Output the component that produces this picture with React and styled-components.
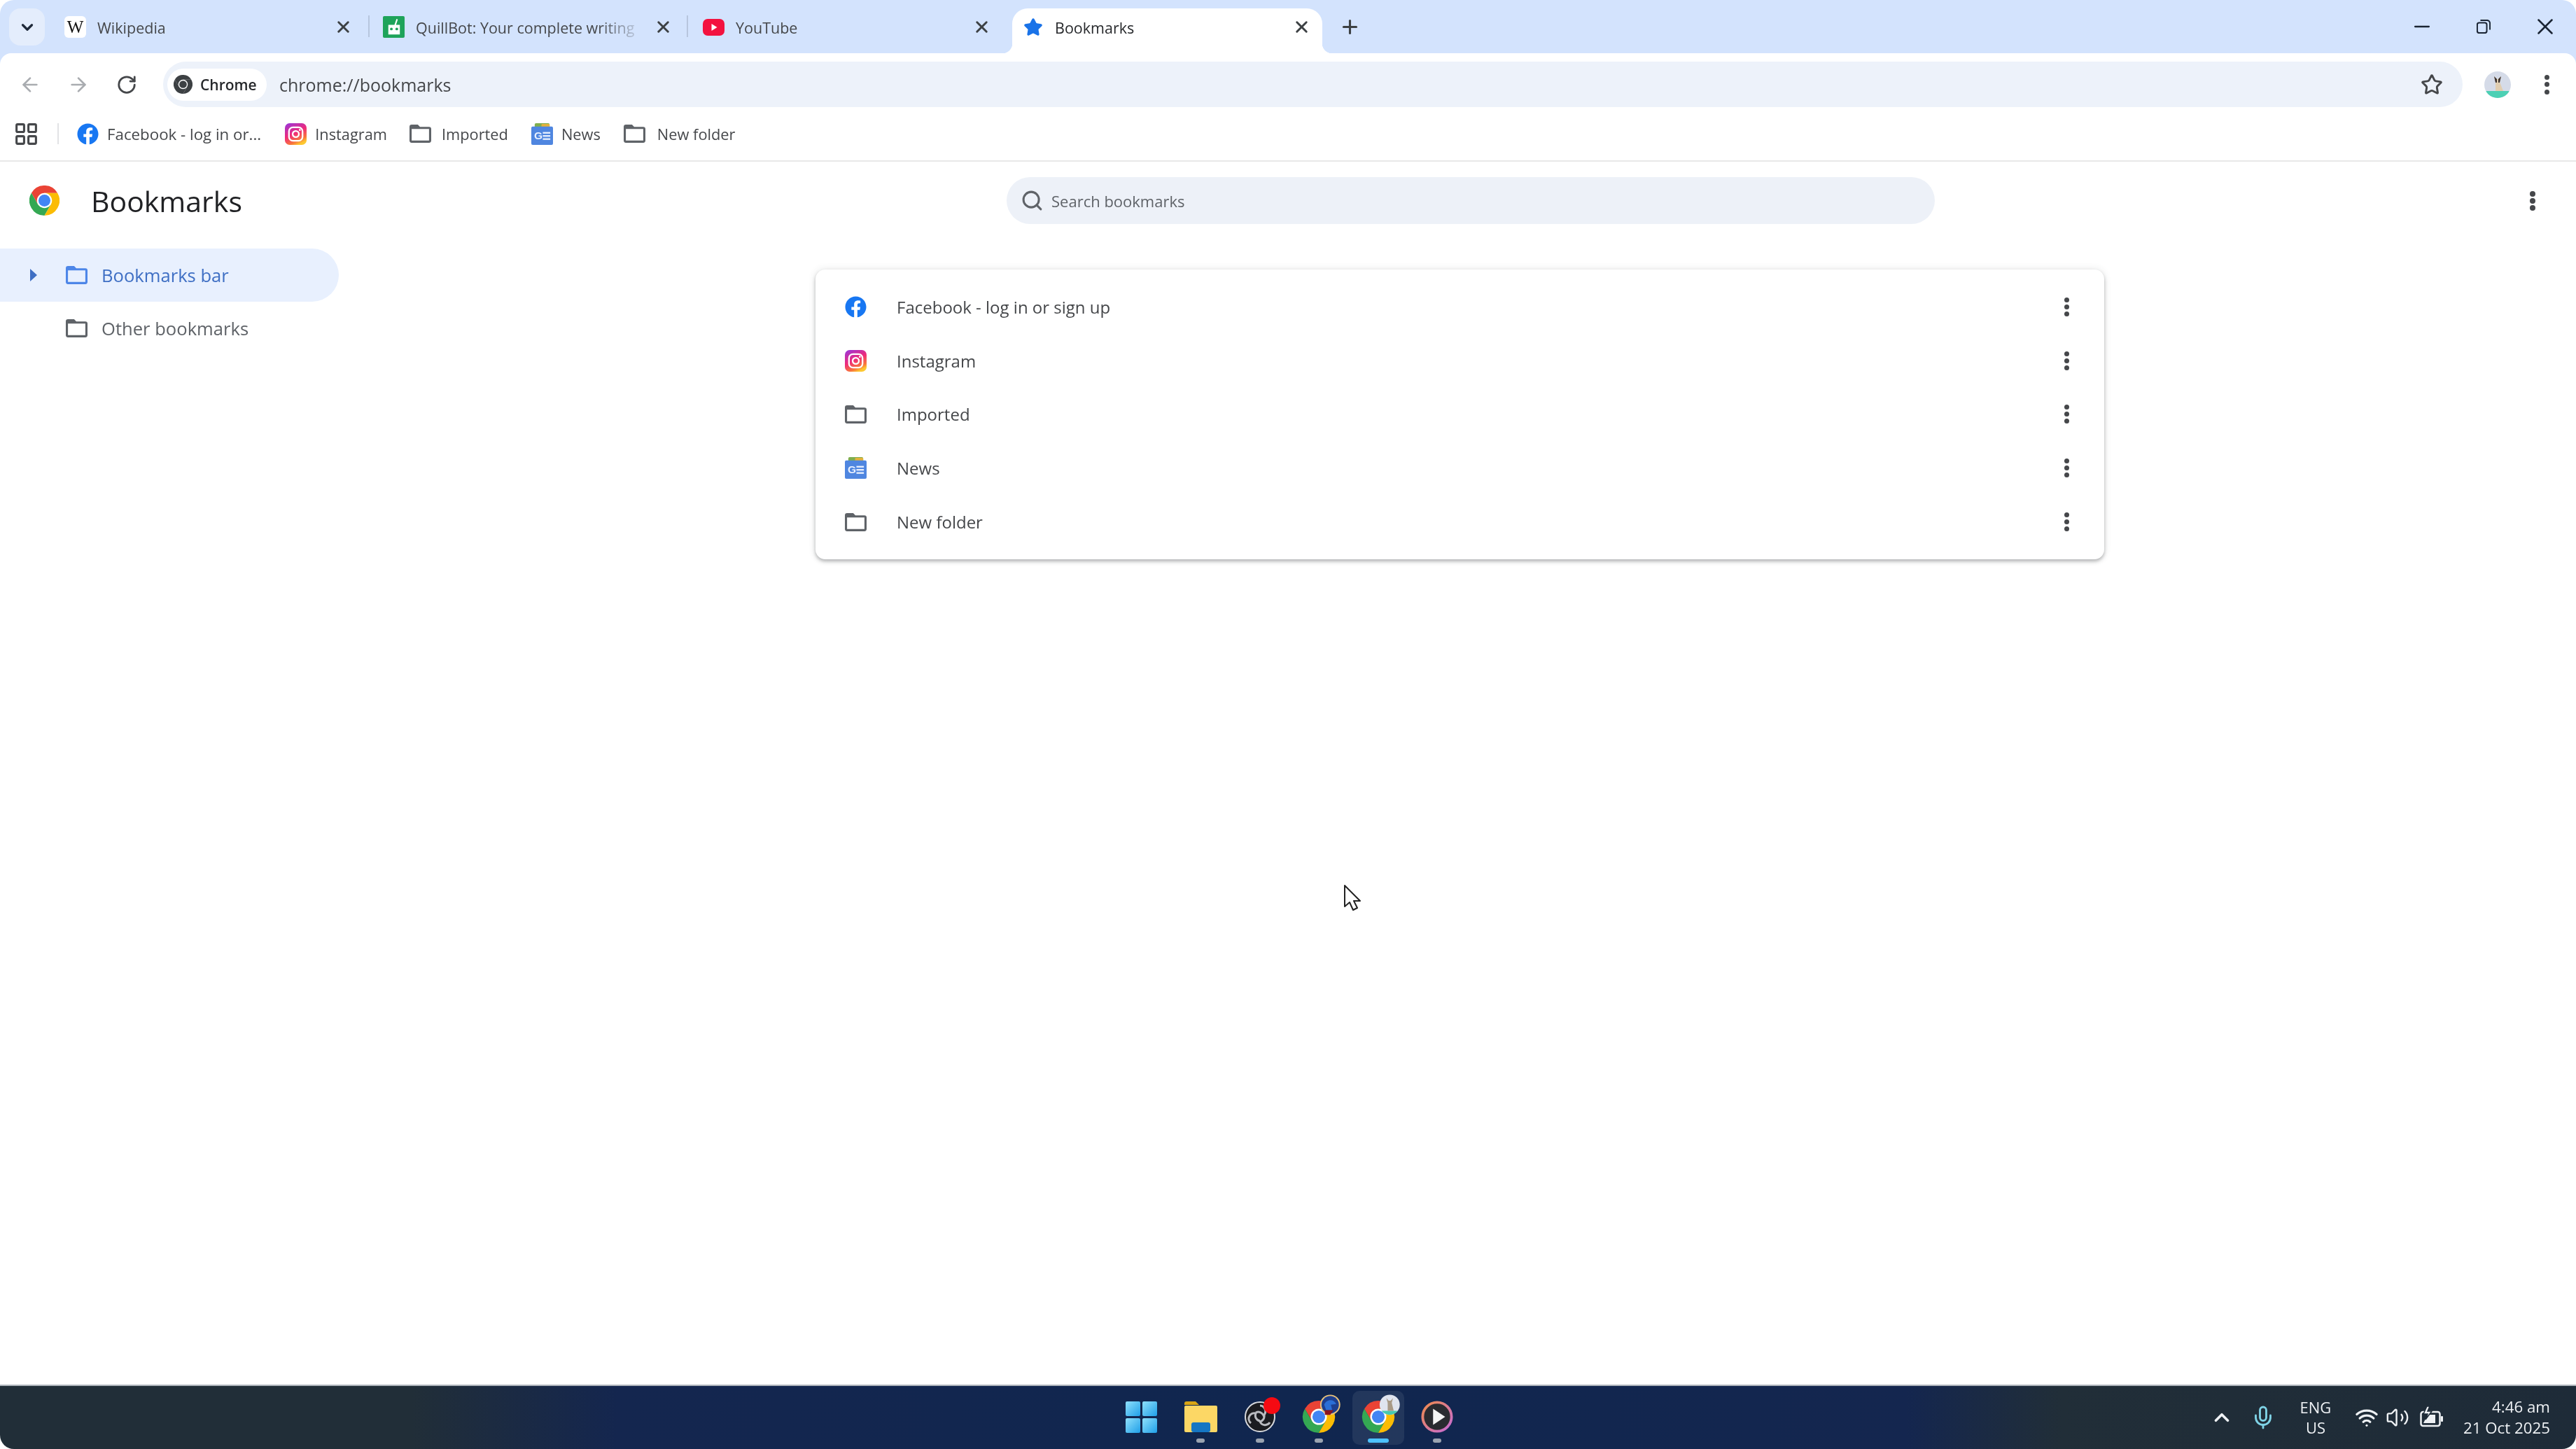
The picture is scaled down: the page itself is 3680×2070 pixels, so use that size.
import React from 'react';
import styled, { createGlobalStyle } from 'styled-components';
import { FaFacebook } from 'react-icons/fa';
import {
  ArrowLeft, ArrowRight, ChevronDown, ChevronUp, LayoutGrid, Mic, Minus, Plus,
  RotateCw, Search, Star, Volume2, Wifi, X,
} from 'lucide-react';

const UI_FONT = '"Open Sans", "Noto Sans", sans-serif';

const GlobalStyle = createGlobalStyle`
  html, body { margin: 0; padding: 0; background: #fff; }
  body { font-family: ${UI_FONT}; }
  * { box-sizing: border-box; }
`;

const Page = styled.div`
  position: relative;
  width: 3680px;
  height: 2070px;
  display: flex;
  flex-direction: column;
  overflow: hidden;
  background: #fff;
  filter: blur(0.5px);
`;

const BrowserTop = styled.div`
  flex: none;
  background: #d3e3fd;
  border-radius: 20px 20px 0 0;
`;

/* ---------- tab strip ---------- */

const TabStrip = styled.div`
  height: 76px;
  display: flex;
  align-items: flex-start;
  padding-left: 13px;
`;

const TabSearch = styled.div`
  width: 51px;
  height: 53px;
  margin: 12px 15px 0 0;
  display: flex;
  align-items: center;
  justify-content: center;
  border-radius: 16px;
  background: #e4edfc;
  color: #1f2a3a;
`;

const Tab = styled.div`
  position: relative;
  width: ${p => p.$width}px;
  height: 64px;
  margin-top: 12px;
  flex: none;
  display: flex;
  align-items: flex-start;
  padding: 11px 0 0 ${p => p.$pad}px;
  color: ${p => (p.$active ? '#26282b' : '#45474a')};
  background: ${p => (p.$active ? '#fff' : 'transparent')};
  border-radius: ${p => (p.$active ? '22px 22px 0 0' : '0')};
  border-right: ${p => (p.$divider ? '2px solid' : 'none')};
  border-image: ${p => (p.$divider ? 'linear-gradient(transparent 11px, #b7c6de 11px, #b7c6de 41px, transparent 41px) 1' : 'none')};

  &::before, &::after {
    content: '';
    display: ${p => (p.$active ? 'block' : 'none')};
    position: absolute;
    bottom: 0;
    width: 14px;
    height: 14px;
  }
  &::before {
    left: -14px;
    background: radial-gradient(circle at 0 0, transparent 14px, #fff 14.5px);
  }
  &::after {
    right: -14px;
    background: radial-gradient(circle at 100% 0, transparent 14px, #fff 14.5px);
  }
`;

const TabIcon = styled.span`
  width: 31px;
  height: 31px;
  flex: none;
  display: flex;
  align-items: center;
  justify-content: center;
`;

const TabTitle = styled.span`
  flex: 1;
  min-width: 0;
  margin-left: 16px;
  padding-top: 1px;
  font-size: 21.5px;
  line-height: 31px;
  white-space: nowrap;
  -webkit-mask-image: ${p => (p.$fade ? 'linear-gradient(90deg, #000 80%, transparent)' : 'none')};
`;

const TabClose = styled.span`
  width: 30px;
  height: 31px;
  margin: 0 ${p => p.$gap}px 0 12px;
  flex: none;
  display: flex;
  align-items: center;
  justify-content: center;
  color: #3c4043;
`;

const NewTab = styled.div`
  margin: 23px 0 0 24px;
  color: #3c4043;
  display: flex;
`;

const WindowControls = styled.div`
  margin-left: auto;
  display: flex;
  height: 76px;
`;

const WindowButton = styled.div`
  width: 88px;
  height: 76px;
  display: flex;
  align-items: center;
  justify-content: center;
  color: #1a2433;
`;

/* ---------- toolbar ---------- */

const Toolbar = styled.div`
  height: 77px;
  display: flex;
  align-items: flex-start;
  padding-top: 12px;
  background: #fff;
  border-radius: 16px 16px 0 0;
`;

const NavGroup = styled.div`
  display: flex;
  width: 233px;
  padding-left: 8px;
`;

const NavButton = styled.div`
  width: 69px;
  height: 65px;
  flex: none;
  display: flex;
  align-items: center;
  justify-content: center;
  color: ${p => (p.$disabled ? '#a9acb0' : '#45474a')};
`;

const AddressBar = styled.div`
  width: 3285px;
  height: 65px;
  flex: none;
  display: flex;
  align-items: center;
  padding: 0 28px 0 6px;
  border-radius: 33px;
  background: #edf2fa;
`;

const SecurityChip = styled.div`
  width: 142px;
  height: 46px;
  flex: none;
  display: flex;
  align-items: center;
  gap: 11px;
  padding-left: 9px;
  border-radius: 23px;
  background: #fff;
  color: #26282b;
  font-size: 21px;
  font-weight: 600;
`;

const UrlText = styled.span`
  margin-left: 18px;
  font-size: 25px;
  color: #45474a;
`;

const BookmarkStar = styled.div`
  margin-left: auto;
  display: flex;
  color: #45474a;
`;

const ToolbarEnd = styled.div`
  flex: 1;
  display: flex;
  align-items: center;
  justify-content: space-between;
  height: 65px;
  padding: 0 38px 0 31px;
`;

const MenuDots = styled.div`
  display: flex;
  flex-direction: column;
  align-items: center;
  gap: ${p => p.$gap}px;
  span {
    width: ${p => p.$size}px;
    height: ${p => p.$size}px;
    border-radius: 50%;
    background: #45474a;
  }
`;

/* ---------- bookmarks bar ---------- */

const BookmarksBar = styled.div`
  height: 78px;
  flex: none;
  display: flex;
  align-items: center;
  padding-left: 19px;
  background: #fff;
  border-bottom: 2px solid #e8e8e8;
`;

const AppsButton = styled.div`
  display: flex;
  color: #45474a;
`;

const BarDivider = styled.div`
  width: 2px;
  height: 30px;
  margin: 0 26px 0 26px;
  background: #e2e3e5;
`;

const BarItem = styled.div`
  display: flex;
  align-items: center;
  gap: ${p => p.$iconGap || 12}px;
  margin-right: ${p => p.$gap || 0}px;
  font-size: ${p => p.$size || 21.8}px;
  color: #45474a;
  white-space: nowrap;
`;

/* ---------- main page ---------- */

const Main = styled.div`
  flex: 1;
  min-height: 0;
  display: flex;
  flex-direction: column;
`;

const PageHeader = styled.div`
  height: 124px;
  flex: none;
  display: flex;
  align-items: center;
  padding: 0 58px 13px 42px;
`;

const PageTitle = styled.h1`
  width: 1396px;
  margin: 0;
  display: flex;
  align-items: center;
  gap: 45px;
  font-size: 41px;
  font-weight: 500;
  color: #202124;
`;

const SearchBox = styled.div`
  width: 1326px;
  height: 67px;
  flex: none;
  display: flex;
  align-items: center;
  gap: 11px;
  padding-left: 20px;
  border-radius: 34px;
  background: #edf1f8;
  color: #5f6368;
  font-size: 22px;
  font-weight: 500;
`;

const HeaderEnd = styled.div`
  flex: 1;
  display: flex;
  justify-content: flex-end;
`;

const Content = styled.div`
  flex: 1;
  display: flex;
  align-items: flex-start;
`;

const Sidebar = styled.nav`
  width: 484px;
  flex: none;
`;

const TreeRow = styled.div`
  height: 76px;
  display: flex;
  align-items: center;
  padding-left: 43px;
  border-radius: 0 38px 38px 0;
  background: ${p => (p.$selected ? '#e8f0fe' : 'transparent')};
  color: ${p => (p.$selected ? '#3f6fc4' : '#5f6368')};
  font-size: 25.6px;
  font-weight: 500;
`;

const TreeArrow = styled.span`
  width: 51px;
  flex: none;
  display: flex;
`;

const TreeLabel = styled.span`
  margin-left: 20px;
`;

const ListCard = styled.div`
  width: 1841px;
  height: 414px;
  margin: 30px 0 0 681px;
  display: flex;
  flex-direction: column;
  justify-content: center;
  border-radius: 14px;
  background: #fff;
  box-shadow: 0 3px 5px rgba(60, 64, 67, 0.35), 0 0 12px rgba(60, 64, 67, 0.12);
`;

const ListRow = styled.div`
  height: 76.8px;
  display: flex;
  align-items: center;
  padding: 0 50px 0 42px;
`;

const ListIcon = styled.span`
  width: 31px;
  flex: none;
  display: flex;
  justify-content: center;
`;

const ListTitle = styled.span`
  flex: 1;
  margin-left: 43px;
  font-size: 24px;
  color: #45474a;
`;

/* ---------- taskbar ---------- */

const Taskbar = styled.div`
  height: 92px;
  flex: none;
  display: grid;
  grid-template-columns: 1fr auto 1fr;
  align-items: center;
  border-top: 2px solid #aeb4bb;
  border-radius: 0 0 20px 20px;
  background: linear-gradient(90deg, #212e38 0%, #212e38 16%, #14264f 24%, #10264f 50%, #14264f 74%, #212e38 80%, #1e2b38 100%);
`;

const TaskCenter = styled.div`
  grid-column: 2;
  display: flex;
  align-items: center;
  padding-left: 4px;
`;

const TaskButton = styled.div`
  position: relative;
  width: ${p => (p.$active ? 74.6 : 84.6)}px;
  height: 77px;
  margin: 0 ${p => (p.$active ? 5 : 0)}px;
  display: flex;
  align-items: center;
  justify-content: center;
  padding-bottom: 2px;
  border-radius: 10px;
  background: ${p => (p.$active ? 'rgba(255, 255, 255, 0.08)' : 'transparent')};

  svg {
    overflow: visible;
  }

  &::after {
    content: '';
    display: ${p => (p.$open || p.$active ? 'block' : 'none')};
    position: absolute;
    left: 50%;
    bottom: 3px;
    width: ${p => (p.$active ? 30 : 12)}px;
    height: 6px;
    margin-left: ${p => (p.$active ? -15 : -6)}px;
    border-radius: 3px;
    background: ${p => (p.$active ? '#4cc2ff' : '#9aa3b0')};
  }
`;

const Tray = styled.div`
  grid-column: 3;
  display: flex;
  align-items: center;
  justify-content: flex-end;
  padding-right: 37px;
  color: #eef1f4;
`;

const TrayIcon = styled.span`
  display: flex;
  margin-right: ${p => p.$gap}px;
  color: ${p => p.$color || '#eef1f4'};
`;

const Lang = styled.div`
  width: 60px;
  margin-right: 26px;
  font-size: 22px;
  line-height: 29px;
  text-align: center;
`;

const Clock = styled.div`
  margin-left: 28px;
  font-size: 22.3px;
  line-height: 30px;
  text-align: right;
  white-space: nowrap;
`;

const Cursor = styled.svg`
  position: absolute;
  left: 1919px;
  top: 1263px;
`;

const WikiBadge = styled.span`
  width: 31px;
  height: 31px;
  display: flex;
  align-items: center;
  justify-content: center;
  border-radius: 6px;
  background: #fff;
  color: #111;
  font-family: "Liberation Serif", serif;
  font-size: 25px;
`;

/* ---------- drawn icons ---------- */

const ChromeLogo = ({ size, mono }) => (
  <svg width={size} height={size} viewBox="0 0 48 48">
    <path fill={mono ? '#3c4043' : '#ea4335'} d="M44.8 12A24 24 0 0 0 3.2 12L13.6 30 24 24V12z" />
    <path fill={mono ? '#3c4043' : '#34a853'} d="M3.2 12A24 24 0 0 0 24 48L34.4 30 24 24 13.6 30z" />
    <path fill={mono ? '#3c4043' : '#fbbc04'} d="M24 48A24 24 0 0 0 44.8 12H24v12l10.4 6z" />
    <circle cx="24" cy="24" r="12" fill="#fff" />
    <circle cx="24" cy="24" r="9.5" fill={mono ? '#3c4043' : '#4285f4'} />
  </svg>
);

const FolderIcon = ({ color = '#5f6368', width = 31, height = 26 }) => (
  <svg width={width} height={height} viewBox="0 0 30 25">
    <path
      fill={color}
      fillRule="evenodd"
      d="M3 0h8.5l3 3H27a3 3 0 0 1 3 3v16a3 3 0 0 1-3 3H3a3 3 0 0 1-3-3V3a3 3 0 0 1 3-3zM3 6v16h24V6z"
    />
  </svg>
);

const InstagramIcon = ({ size = 31 }) => (
  <svg width={size} height={size} viewBox="0 0 32 32">
    <defs>
      <linearGradient id="ig" x1="0.1" y1="0" x2="0.6" y2="1">
        <stop offset="0" stopColor="#9b36d9" />
        <stop offset="0.5" stopColor="#ee2a7b" />
        <stop offset="0.85" stopColor="#f9773a" />
        <stop offset="1" stopColor="#fdc830" />
      </linearGradient>
    </defs>
    <rect width="32" height="32" rx="7" fill="url(#ig)" />
    <rect x="6" y="6" width="20" height="20" rx="6" fill="none" stroke="#fff" strokeWidth="2.4" />
    <circle cx="16" cy="16" r="4.6" fill="none" stroke="#fff" strokeWidth="2.4" />
    <circle cx="22" cy="10" r="1.4" fill="#fff" />
  </svg>
);

const NewsIcon = ({ size = 31 }) => (
  <svg width={size} height={size} viewBox="0 0 32 32">
    <rect x="5" y="0" width="22" height="8" rx="2" fill="#7fae4e" />
    <rect x="15" y="1" width="12" height="7" rx="1" fill="#e3b23c" />
    <rect y="5" width="32" height="27" rx="2" fill="#4f86e0" />
    <text x="4" y="24" fontFamily="Liberation Sans, sans-serif" fontSize="16" fontWeight="700" fill="#e8f0fe">G</text>
    <rect x="17" y="13" width="11" height="2.4" fill="#e8f0fe" />
    <rect x="17" y="17.6" width="11" height="2.4" fill="#e8f0fe" />
    <rect x="17" y="22.2" width="11" height="2.4" fill="#e8f0fe" />
  </svg>
);

const YouTubeIcon = () => (
  <svg width="31" height="24" viewBox="0 0 31 24">
    <rect width="31" height="24" rx="7" fill="#f3123f" />
    <path d="M12.5 7l8 5-8 5z" fill="#fff" />
  </svg>
);

const QuillBotIcon = () => (
  <svg width="31" height="31" viewBox="0 0 32 32">
    <rect width="32" height="32" rx="2" fill="#1ea35a" />
    <path d="M20 4l2 1-2.6 8H25v14H8V13h9z" fill="#fff" />
    <circle cx="12.5" cy="19" r="2" fill="#1ea35a" />
    <circle cx="20.5" cy="19" r="2" fill="#1ea35a" />
  </svg>
);

const Avatar = () => (
  <svg width="38" height="38" viewBox="0 0 38 38">
    <clipPath id="avatar-clip"><circle cx="19" cy="19" r="19" /></clipPath>
    <g clipPath="url(#avatar-clip)">
      <rect width="38" height="38" fill="#d5dbe8" />
      <rect y="28" width="38" height="10" fill="#4cd0b4" />
      <path d="M16 28V15l-2-8 4 4h2l4-4-2 8 5 13z" fill="#e0cdb0" />
      <path d="M14 7l4 4v5h-2zM24 7l-4 4v5h2z" fill="#3d3430" />
    </g>
  </svg>
);

const RestoreIcon = () => (
  <svg width="20" height="20" viewBox="0 0 22 22" fill="none" stroke="currentColor" strokeWidth="2.2">
    <rect x="1" y="5" width="15" height="16" rx="3" />
    <path d="M6 1h10a5 5 0 0 1 5 5v10" />
  </svg>
);

const StartIcon = () => (
  <svg width="45" height="45" viewBox="0 0 45 45">
    <defs>
      <linearGradient id="start" x1="0" y1="0" x2="1" y2="1">
        <stop offset="0" stopColor="#8fe0fb" />
        <stop offset="1" stopColor="#1f9fe8" />
      </linearGradient>
    </defs>
    <rect width="21" height="21" rx="2" fill="url(#start)" />
    <rect x="24" width="21" height="21" rx="2" fill="url(#start)" />
    <rect y="24" width="21" height="21" rx="2" fill="url(#start)" />
    <rect x="24" y="24" width="21" height="21" rx="2" fill="url(#start)" />
  </svg>
);

const ExplorerIcon = () => (
  <svg width="47" height="44" viewBox="0 0 47 44">
    <path d="M0 3a3 3 0 0 1 3-3h13l5 5H0z" fill="#d9a514" />
    <rect y="6" width="47" height="38" rx="2" fill="#fcd765" />
    <rect x="10" y="30" width="27" height="14" rx="3" fill="#1576c4" />
  </svg>
);

const ObsIcon = () => (
  <svg width="44" height="44" viewBox="0 0 44 44">
    <circle cx="22" cy="22" r="21" fill="#1b1c20" stroke="#d8dade" strokeWidth="2" />
    <path d="M22 6a8 8 0 0 1 5 14 8 8 0 0 0-11-4M36 30a8 8 0 0 1-14-1 8 8 0 0 0 6-9M9 31a8 8 0 0 1 7-14 8 8 0 0 0 6 11" fill="none" stroke="#b9bbc0" strokeWidth="3" />
    <circle cx="39" cy="6" r="12" fill="#f50a12" />
  </svg>
);

const ChromeWithBadge = ({ children }) => (
  <svg width="46" height="46" viewBox="0 0 48 48">
    <path fill="#ea4335" d="M44.8 12A24 24 0 0 0 3.2 12L13.6 30 24 24V12z" />
    <path fill="#34a853" d="M3.2 12A24 24 0 0 0 24 48L34.4 30 24 24 13.6 30z" />
    <path fill="#fbbc04" d="M24 48A24 24 0 0 0 44.8 12H24v12l10.4 6z" />
    <circle cx="24" cy="24" r="12" fill="#fff" />
    <circle cx="24" cy="24" r="9.5" fill="#4285f4" />
    {children}
  </svg>
);

const PlayIcon = () => (
  <svg width="46" height="46" viewBox="0 0 48 48">
    <defs>
      <linearGradient id="play-ring" x1="0" y1="0" x2="1" y2="1">
        <stop offset="0" stopColor="#f08a4b" />
        <stop offset="1" stopColor="#c56bd6" />
      </linearGradient>
    </defs>
    <circle cx="24" cy="24" r="21.5" fill="#2a2b30" stroke="url(#play-ring)" strokeWidth="4" />
    <path d="M18 12l18 12-18 12z" fill="#f4f4f4" />
  </svg>
);

const BatteryIcon = () => (
  <svg width="34" height="32" viewBox="0 0 34 32" fill="none">
    <rect x="1.5" y="8" width="27" height="20" rx="3" stroke="#eef1f4" strokeWidth="2.5" />
    <rect x="30" y="14" width="3" height="8" rx="1" fill="#eef1f4" />
    <path d="M5 24l6-12h11v12z" fill="#eef1f4" />
    <path d="M10 0L5 11h6l-3 8 9-12h-6l3-7z" fill="#eef1f4" stroke="#1e2b38" strokeWidth="1.5" />
  </svg>
);

const Dots = ({ size = 7, gap = 3 }) => (
  <MenuDots $size={size} $gap={gap}>
    <span /><span /><span />
  </MenuDots>
);

const bookmarks = [
  { title: 'Facebook - log in or sign up', icon: <FaFacebook size={31} color="#1877f2" /> },
  { title: 'Instagram', icon: <InstagramIcon /> },
  { title: 'Imported', icon: <FolderIcon /> },
  { title: 'News', icon: <NewsIcon /> },
  { title: 'New folder', icon: <FolderIcon /> },
];

const tabs = [
  { title: 'Wikipedia', width: 449, pad: 13, closeGap: 21, divider: true, icon: <WikiBadge>W</WikiBadge> },
  { title: 'QuillBot: Your complete writing', width: 455, pad: 19, closeGap: 19, divider: true, fade: true, icon: <QuillBotIcon /> },
  { title: 'YouTube', width: 463, pad: 21, closeGap: 29, icon: <YouTubeIcon /> },
  { title: 'Bookmarks', width: 443, pad: 14, closeGap: 15, active: true, icon: <Star size={28} fill="#1a73e8" color="#1a73e8" /> },
];

export default function App() {
  return (
    <Page>
      <GlobalStyle />

      <BrowserTop>
        <TabStrip>
          <TabSearch><ChevronDown size={26} strokeWidth={3} /></TabSearch>
          {tabs.map(tab => (
            <Tab key={tab.title} $width={tab.width} $pad={tab.pad} $active={tab.active} $divider={tab.divider}>
              <TabIcon>{tab.icon}</TabIcon>
              <TabTitle $fade={tab.fade}>{tab.title}</TabTitle>
              <TabClose $gap={tab.closeGap}><X size={27} strokeWidth={2.6} /></TabClose>
            </Tab>
          ))}
          <NewTab><Plus size={31} strokeWidth={2.4} /></NewTab>
          <WindowControls>
            <WindowButton><Minus size={34} strokeWidth={1.6} /></WindowButton>
            <WindowButton><RestoreIcon /></WindowButton>
            <WindowButton><X size={38} strokeWidth={1.6} /></WindowButton>
          </WindowControls>
        </TabStrip>

        <Toolbar>
          <NavGroup>
            <NavButton $disabled><ArrowLeft size={32} strokeWidth={2} /></NavButton>
            <NavButton $disabled><ArrowRight size={32} strokeWidth={2} /></NavButton>
            <NavButton><RotateCw size={30} strokeWidth={2.2} /></NavButton>
          </NavGroup>
          <AddressBar>
            <SecurityChip><ChromeLogo size={27} mono />Chrome</SecurityChip>
            <UrlText>chrome://bookmarks</UrlText>
            <BookmarkStar><Star size={32} strokeWidth={2.2} /></BookmarkStar>
          </AddressBar>
          <ToolbarEnd>
            <Avatar />
            <Dots size={7} gap={3.5} />
          </ToolbarEnd>
        </Toolbar>
      </BrowserTop>

      <BookmarksBar>
        <AppsButton><LayoutGrid size={37} strokeWidth={2} /></AppsButton>
        <BarDivider />
        <BarItem $gap={34} $size={22.3}><FaFacebook size={31} color="#1877f2" />Facebook - log in or...</BarItem>
        <BarItem $gap={32}><InstagramIcon />Instagram</BarItem>
        <BarItem $gap={33} $iconGap={15}><FolderIcon />Imported</BarItem>
        <BarItem $gap={33}><NewsIcon />News</BarItem>
        <BarItem $iconGap={17}><FolderIcon />New folder</BarItem>
      </BookmarksBar>

      <Main>
        <PageHeader>
          <PageTitle><ChromeLogo size={43} />Bookmarks</PageTitle>
          <SearchBox><Search size={33} strokeWidth={2.2} />Search bookmarks</SearchBox>
          <HeaderEnd><Dots size={8} gap={2} /></HeaderEnd>
        </PageHeader>
        <Content>
          <Sidebar>
            <TreeRow $selected>
              <TreeArrow><svg width="10" height="18" viewBox="0 0 10 18"><path d="M0 0l10 9-10 9z" fill="#3f6fc4" /></svg></TreeArrow>
              <FolderIcon color="#4d86e8" />
              <TreeLabel>Bookmarks bar</TreeLabel>
            </TreeRow>
            <TreeRow>
              <TreeArrow />
              <FolderIcon />
              <TreeLabel>Other bookmarks</TreeLabel>
            </TreeRow>
          </Sidebar>
          <ListCard>
            {bookmarks.map(item => (
              <ListRow key={item.title}>
                <ListIcon>{item.icon}</ListIcon>
                <ListTitle>{item.title}</ListTitle>
                <Dots size={7} gap={3} />
              </ListRow>
            ))}
          </ListCard>
        </Content>
      </Main>

      <Taskbar>
        <TaskCenter>
          <TaskButton><StartIcon /></TaskButton>
          <TaskButton $open><ExplorerIcon /></TaskButton>
          <TaskButton $open><ObsIcon /></TaskButton>
          <TaskButton $open>
            <ChromeWithBadge>
              <circle cx="41" cy="6" r="15" fill="#e8c27a" />
              <circle cx="41" cy="6" r="13" fill="#1d3f8f" />
              <path d="M32 6c3-9 15-9 18-1l-8 1 2 8H35z" fill="#2b6fd6" />
              <path d="M33 14h13l-5 7h-8z" fill="#8a1420" />
            </ChromeWithBadge>
          </TaskButton>
          <TaskButton $active>
            <ChromeWithBadge>
              <circle cx="41" cy="6" r="15" fill="#dfe4ee" />
              <path d="M29 15a15 15 0 0 0 24 0z" fill="#46c9b0" />
              <path d="M38 15V3l-2-7 3.5 4h3L46-4l-2 7 3 12z" fill="#a89a86" />
            </ChromeWithBadge>
          </TaskButton>
          <TaskButton $open><PlayIcon /></TaskButton>
        </TaskCenter>
        <Tray>
          <TrayIcon $gap={24}><ChevronUp size={34} strokeWidth={2.6} /></TrayIcon>
          <TrayIcon $gap={27} $color="#7fd3e6"><Mic size={36} strokeWidth={1.9} /></TrayIcon>
          <Lang>ENG<br />US</Lang>
          <TrayIcon $gap={10}><Wifi size={34} strokeWidth={2.2} /></TrayIcon>
          <TrayIcon $gap={15}><Volume2 size={34} strokeWidth={1.7} /></TrayIcon>
          <BatteryIcon />
          <Clock>4:46 am<br />21 Oct 2025</Clock>
        </Tray>
      </Taskbar>

      <Cursor width="26" height="40" viewBox="0 0 26 40">
        <path d="M2 2v30l7-6 5 11 6-3-5-10h9z" fill="#fff" stroke="#222" strokeWidth="2" strokeLinejoin="round" />
      </Cursor>
    </Page>
  );
}
